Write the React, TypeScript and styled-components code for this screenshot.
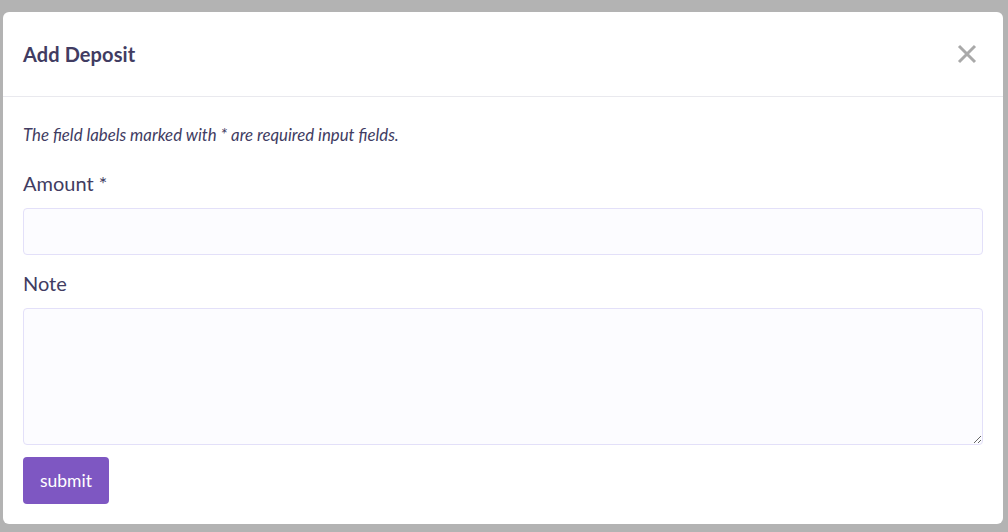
import styled, { createGlobalStyle } from 'styled-components'

const GlobalStyle = createGlobalStyle`
  html, body {
    margin: 0;
    padding: 0;
    height: 100%;
    overflow: hidden;
  }
  body {
    background: #b3b3b3;
    font-family: 'Lato', 'Noto Sans', sans-serif;
    color: #413c62;
  }
  * {
    box-sizing: border-box;
  }
`

const Backdrop = styled.div`
  width: 100%;
  height: 532px;
  padding: 12px 5px 0 3px;
`

const Modal = styled.div`
  width: 1000px;
  height: 512px;
  background: #ffffff;
  border-radius: 6px;
  display: flex;
  flex-direction: column;
`

const ModalHeader = styled.header`
  height: 85px;
  padding: 0 20px;
  display: flex;
  align-items: center;
  justify-content: space-between;
  border-bottom: 1px solid #e9e9ee;
`

const Title = styled.h5`
  margin: 0;
  font-size: 20px;
  font-weight: 700;
  color: #413c62;
  letter-spacing: 0.1px;
`

const CloseButton = styled.button`
  width: 28px;
  height: 28px;
  padding: 0;
  border: none;
  background: transparent;
  display: flex;
  align-items: center;
  justify-content: center;
  cursor: pointer;
  margin-right: 2px;
`

const ModalBody = styled.form`
  padding: 28px 20px 0;
  display: flex;
  flex-direction: column;
`

const Hint = styled.p`
  margin: 0 0 27px;
  font-size: 16.8px;
  line-height: 20px;
  font-style: italic;
  color: #413c62;
`

const Label = styled.label`
  display: block;
  font-size: 20px;
  color: #413c62;
  margin-bottom: 13px;
  line-height: 23px;
`

const Input = styled.input`
  display: block;
  width: 100%;
  height: 47px;
  border: 1px solid #e3e0f9;
  border-radius: 4px;
  background: #fcfcff;
  padding: 0 12px;
  font: inherit;
  margin-bottom: 17px;
  outline: none;
`

const TextArea = styled.textarea`
  display: block;
  width: 100%;
  height: 137px;
  border: 1px solid #e3e0f9;
  border-radius: 4px;
  background: #fcfcff;
  padding: 8px 12px;
  font: inherit;
  margin-bottom: 12px;
  outline: none;
`

const SubmitButton = styled.button`
  align-self: flex-start;
  width: 86px;
  height: 47px;
  border: none;
  border-radius: 4px;
  background: #7e57c2;
  color: #ffffff;
  font-family: 'Lato', 'Noto Sans', sans-serif;
  font-size: 17.5px;
  cursor: pointer;
`

const CloseIcon = () => (
  <svg width="20" height="20" viewBox="0 0 20 20">
    <path d="M2 2 L18 18 M18 2 L2 18" stroke="#a9a9a9" strokeWidth="3" strokeLinecap="butt" />
  </svg>
)

export default function App() {
  return (
    <>
      <GlobalStyle />
      <Backdrop>
        <Modal>
          <ModalHeader>
            <Title>Add Deposit</Title>
            <CloseButton type="button" aria-label="Close">
              <CloseIcon />
            </CloseButton>
          </ModalHeader>
          <ModalBody onSubmit={e => e.preventDefault()}>
            <Hint>The field labels marked with * are required input fields.</Hint>
            <Label htmlFor="amount">Amount *</Label>
            <Input id="amount" type="text" />
            <Label htmlFor="note">Note</Label>
            <TextArea id="note" />
            <SubmitButton type="submit">submit</SubmitButton>
          </ModalBody>
        </Modal>
      </Backdrop>
    </>
  )
}
